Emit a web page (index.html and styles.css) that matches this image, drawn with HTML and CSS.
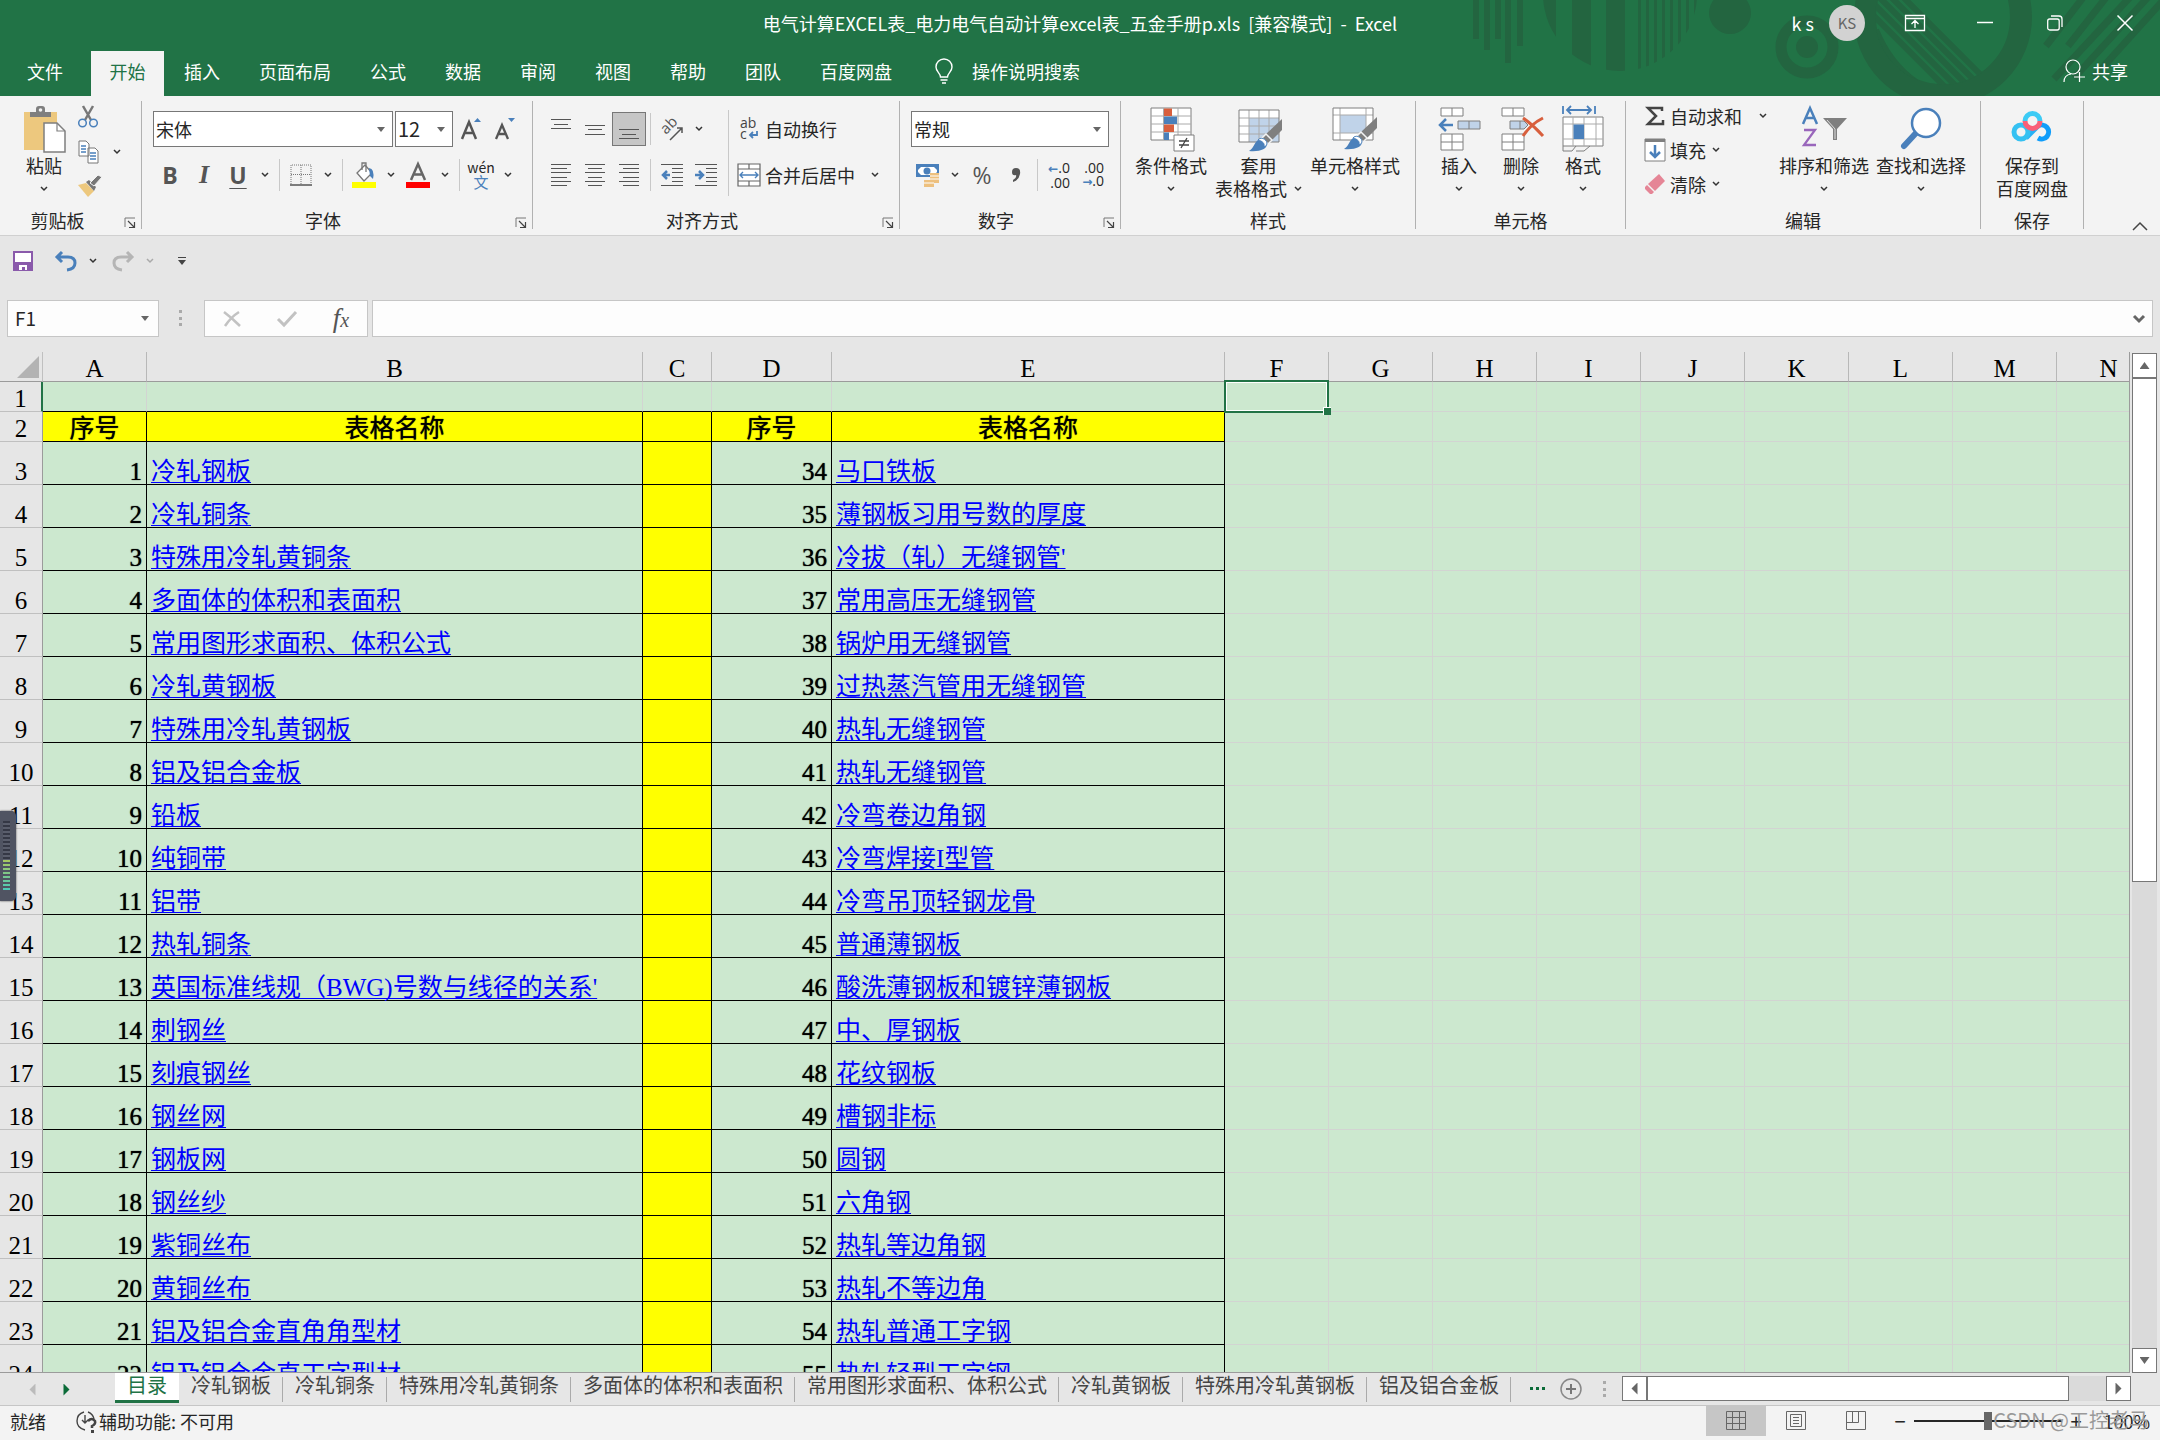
FILE: index.html
```html
<!doctype html>
<html lang="zh-CN">
    <head>
        <meta charset="utf-8" />
        <title>电气计算EXCEL表 - Excel</title>
        <link rel="stylesheet" href="styles.css">
    </head>
    <body>
        <svg class="sprite" aria-hidden="true">
            <symbol id="chev" viewBox="0 0 8 6"><path d="M1 1l3 3 3-3" fill="none" stroke="currentColor" stroke-width="1.5"/></symbol>
            <symbol id="launch" viewBox="0 0 12 12"><path d="M1 10V1h10" fill="none" stroke="#777"/><path d="M4 4l6 6M10.500 5v5.500H5" fill="none" stroke="#444" stroke-width="1.200"/></symbol>
            <symbol id="brush" viewBox="0 0 34 34"><path d="M34 1v11L24 22l-6-6z" fill="#7f7f7f"/><path d="M18 16l6 6-4 4-6-6z" fill="#7f7f7f" stroke="#f3f3f3" stroke-width="1.500"/><path d="M1 33c5-3 5-8 9-11 4-2 8 1 9 4 0 5-7 8-18 7z" fill="#4a80bb"/><path d="M10 22c2-3 8-2 9 3 0 2-1 3-3 4 1-4-2-6-6-7z" fill="#fff" stroke="#4a80bb"/></symbol>
        </svg>

        <header class="top">
            <svg class="deco" viewBox="0 0 760 96" width="760" height="96" aria-hidden="true">
                <defs>
                    <clipPath id="ball"><circle cx="220" cy="-6" r="77"/></clipPath>
                    <clipPath id="disc"><circle cx="543" cy="17" r="68"/></clipPath>
                </defs>
                <g fill="#236540">
                    <path d="M73 0h6v39h-6zM84 0h6v50h-6zM95 0h6v39h-6zM105 0h6v63h-6zM117 0h6v46h-6z"/>
                    <g clip-path="url(#ball)"><path d="M142 0h14v80h-14zM172 0h19v80h-19zM206 0h19v80h-19zM238 0h3v80h-3zM246 0h3v80h-3zM254 0h3v80h-3zM262 0h3v80h-3zM270 0h3v80h-3zM278 0h3v80h-3zM286 0h3v80h-3zM294 0h3v80h-3z"/></g>
                    <circle cx="330" cy="13" r="21"/>
                    <circle cx="407" cy="47" r="11"/>
                </g>
                <g fill="none" stroke="#236540">
                    <circle cx="407" cy="47" r="26" stroke-width="11"/>
                    <circle cx="543" cy="17" r="78" stroke-width="22"/>
                    <g clip-path="url(#disc)" stroke-width="6"><path d="M496-10l90 90M484-10l100 100M472-10l100 100M460-10l100 100M448-10l100 100" /><path d="M476 30q14 34 40 52l-34-18z" fill="#236540"/></g>
                    <path d="M685-5l-39 51M708-5l-40 51M732-5l-78 84M750-5l-76 83M768-5l-74 82" stroke-width="7"/>
                </g>
            </svg>
            <div class="titlebar">
                <div class="doc-title">电气计算EXCEL表_电力电气自动计算excel表_五金手册p.xls&nbsp; [兼容模式]&nbsp; -&nbsp; Excel</div>
                <div class="win">
                    <span class="user">k s</span>
                    <span class="avatar">KS</span>
                    <button class="win-btn" aria-label="功能区显示选项"><svg width="20" height="16" viewBox="0 0 20 16"><path d="M.5.5h19v15H.5zM.5 3.500h19M10 13V6M6.500 9L10 5.500 13.500 9" fill="none" stroke="#fff" stroke-width="1.300"/></svg></button>
                    <button class="win-btn" aria-label="最小化"><svg width="16" height="16"><path d="M0 7.500h16" stroke="#fff" stroke-width="1.500"/></svg></button>
                    <button class="win-btn" aria-label="还原"><svg width="16" height="16" viewBox="0 0 16 16"><rect x=".7" y="4" width="11.500" height="11" rx="2" fill="none" stroke="#fff" stroke-width="1.300"/><path d="M4 1h8q3 0 3 3v8" fill="none" stroke="#fff" stroke-width="1.300"/></svg></button>
                    <button class="win-btn" aria-label="关闭"><svg width="16" height="16"><path d="M.5.5l15 15M15.500.5l-15 15" stroke="#fff" stroke-width="1.500"/></svg></button>
                </div>
            </div>
            <nav class="tabs">
                <button class="tab file">文件</button>
                <button class="tab active">开始</button>
                <button class="tab">插入</button>
                <button class="tab">页面布局</button>
                <button class="tab">公式</button>
                <button class="tab">数据</button>
                <button class="tab">审阅</button>
                <button class="tab">视图</button>
                <button class="tab">帮助</button>
                <button class="tab">团队</button>
                <button class="tab">百度网盘</button>
                <button class="tab tell"><svg width="18" height="25" viewBox="0 0 18 25"><path d="M5.500 18c0-4-4.500-5-4.500-10a8 8 0 0 1 16 0c0 5-4.500 6-4.500 10zM5.500 21h7M7 24h4" fill="none" stroke="#fff" stroke-width="1.400"/></svg>操作说明搜索</button>
                <button class="tab share"><svg width="22" height="24" viewBox="0 0 22 24"><circle cx="10" cy="8" r="7" fill="none" stroke="#fff" stroke-width="1.200"/><path d="M1 23q0-7 7-8M11 18h11M16.500 13v10" fill="none" stroke="#fff" stroke-width="1.200"/></svg>共享</button>
            </nav>
        </header>

        <section class="ribbon">
            <div class="group clipboard">
                <div class="body">
                    <button class="big"><svg width="44" height="48" viewBox="0 0 44 48"><path d="M2 7h33v38H2z" fill="#edc87e"/><path d="M8 12V7h6V4q0-3 3-3h3q3 0 3 3v3h6v5z" fill="#7f7f7f"/><circle cx="18.500" cy="5" r="1.800" fill="#f3f3f3"/><path d="M22 18h13l8 8v21H22z" fill="#fff" stroke="#7f7f7f" stroke-width="1.500"/><path d="M35 18v8h8" fill="none" stroke="#7f7f7f" stroke-width="1.200"/></svg><span>粘贴</span><svg class="chev"><use href="#chev"/></svg></button>
                    <div class="stack">
                        <button aria-label="剪切"><svg width="20" height="24" viewBox="0 0 20 24"><path d="M5 1l8 14M15 1L7 15" stroke="#777" stroke-width="2.500"/><circle cx="4.500" cy="18" r="3.800" fill="none" stroke="#4a80bb" stroke-width="1.500"/><circle cx="15.500" cy="18" r="3.800" fill="none" stroke="#4a80bb" stroke-width="1.500"/></svg></button>
                        <div class="line"><button aria-label="复制"><svg width="21" height="24" viewBox="0 0 21 24"><path d="M1 1h7l3 3v12H1zM10 8h7l3 3v12H10z" fill="#fff" stroke="#777"/><path d="M3 6h5M3 9h5M3 12h5M12 13h6M12 16h6M12 19h6" stroke="#4a80bb" stroke-width="1.300"/></svg></button><svg class="chev"><use href="#chev"/></svg></div>
                        <button aria-label="格式刷"><svg width="24" height="22" viewBox="0 0 24 22"><path d="M0 10l8-2 8 8-6 6z" fill="#edc87e"/><path d="M8 7l3-2 7 7-2 4z" fill="#777"/><path d="M12 8l8-8 4 2-8 9z" fill="#777" stroke="#f3f3f3"/></svg></button>
                    </div>
                </div>
                <footer>剪贴板<button class="launch" aria-label="剪贴板选项"><svg width="12" height="12"><use href="#launch"/></svg></button></footer>
            </div>

            <div class="group font">
                <div class="rows">
                    <div class="line">
                        <span class="combo family"><select aria-label="字体"><option>宋体</option></select></span>
                        <span class="combo size"><select aria-label="字号"><option>12</option></select></span>
                        <button class="ico" aria-label="增大字号"><svg width="20" height="22" viewBox="0 0 20 22"><path d="M1 21L8 4l7 17M3.500 15h9" fill="none" stroke="#555" stroke-width="2.500"/><path d="M13 4l3.500-4L20 4z" fill="#4a80bb"/></svg></button>
                        <button class="ico" aria-label="减小字号"><svg width="20" height="22" viewBox="0 0 20 22"><path d="M1 21L7 7l6 14M3 16h8" fill="none" stroke="#555" stroke-width="2.300"/><path d="M13 0l3.500 4L20 0z" fill="#4a80bb"/></svg></button>
                    </div>
                    <div class="line">
                        <button class="ico glyph b">B</button>
                        <button class="ico glyph i">I</button>
                        <button class="ico glyph u">U</button>
                        <svg class="chev"><use href="#chev"/></svg>
                        <i class="sep"></i>
                        <button class="ico" aria-label="边框"><svg width="22" height="22" viewBox="0 0 22 22"><path d="M1 20V1h20v19M1 10.500h20M11 1v19" fill="none" stroke="#777" stroke-dasharray="1 1"/><path d="M0 21h22" stroke="#555" stroke-width="1.500"/></svg></button>
                        <svg class="chev"><use href="#chev"/></svg>
                        <i class="sep"></i>
                        <button class="ico" aria-label="填充颜色"><svg width="24" height="26" viewBox="0 0 24 26"><path d="M5 11l8-8 7 8-8 8z" fill="#fff" stroke="#777" stroke-width="1.300"/><path d="M10 8V1h4v9" fill="none" stroke="#777" stroke-width="1.300"/><path d="M17 6q6 1 4 11l-3-3z" fill="#4a80bb"/><path d="M0 20h24v6H0z" fill="#ff0"/></svg></button>
                        <svg class="chev"><use href="#chev"/></svg>
                        <button class="ico" aria-label="字体颜色"><svg width="24" height="26" viewBox="0 0 24 26"><path d="M5 18l7-16 7 16M7.500 12.500h9" fill="none" stroke="#666" stroke-width="2.500"/><path d="M0 20h24v6H0z" fill="red"/></svg></button>
                        <svg class="chev"><use href="#chev"/></svg>
                        <i class="sep"></i>
                        <button class="ico pinyin"><span>wén</span><b>文</b></button>
                        <svg class="chev"><use href="#chev"/></svg>
                    </div>
                </div>
                <footer>字体<button class="launch" aria-label="字体选项"><svg width="12" height="12"><use href="#launch"/></svg></button></footer>
            </div>

            <div class="group align">
                <div class="body">
                    <div class="rows">
                        <div class="line">
                            <button class="ico" aria-label="顶端对齐"><svg width="20" height="26"><path d="M0 3.500h20M3 8.500h14M0 12.500h20" stroke="#555"/></svg></button>
                            <button class="ico" aria-label="垂直居中"><svg width="20" height="26"><path d="M0 9.500h20M3 13.500h14M0 18.500h20" stroke="#555"/></svg></button>
                            <button class="ico on" aria-label="底端对齐"><svg width="20" height="26"><path d="M0 13.500h20M3 18.500h14M0 22.500h20" stroke="#555"/></svg></button>
                            <i class="sep"></i>
                            <button class="ico" aria-label="方向"><svg width="22" height="22" viewBox="0 0 22 22"><text font-size="15" fill="#555" transform="translate(5 17) rotate(-45)" font-family="Open Sans">ab</text><path d="M9 22L21 10M16 10h5v5" fill="none" stroke="#555" stroke-width="1.500"/></svg></button>
                            <svg class="chev"><use href="#chev"/></svg>
                        </div>
                        <div class="line">
                            <button class="ico" aria-label="左对齐"><svg width="20" height="22"><path d="M0 .5h20M0 4.500h16M0 8.500h20M0 13.500h16M0 17.500h20M0 21.500h16" stroke="#555"/></svg></button>
                            <button class="ico" aria-label="居中"><svg width="20" height="22"><path d="M0 .5h20M3 4.500h14M0 8.500h20M3 13.500h14M0 17.500h20M3 21.500h14" stroke="#555"/></svg></button>
                            <button class="ico" aria-label="右对齐"><svg width="20" height="22"><path d="M0 .5h20M4 4.500h16M0 8.500h20M4 13.500h16M0 17.500h20M4 21.500h16" stroke="#555"/></svg></button>
                            <i class="sep"></i>
                            <button class="ico" aria-label="减少缩进"><svg width="22" height="22"><path d="M0 .5h22M11 4.500h11M11 8.500h11M11 13.500h11M11 17.500h11M0 21.500h22" stroke="#555"/><path d="M9 11H2M6 7l-4 4 4 4" fill="none" stroke="#4a80bb" stroke-width="2.500"/></svg></button>
                            <button class="ico" aria-label="增加缩进"><svg width="22" height="22"><path d="M0 .5h22M11 4.500h11M11 8.500h11M11 13.500h11M11 17.500h11M0 21.500h22" stroke="#555"/><path d="M0 11h8M4 7l4 4-4 4" fill="none" stroke="#4a80bb" stroke-width="2.500"/></svg></button>
                        </div>
                    </div>
                    <i class="sep tall"></i>
                    <div class="rows wrap">
                        <div class="line"><button class="text"><svg width="24" height="24" viewBox="0 0 24 24"><text x="3" y="11" font-size="14" fill="#444" font-family="Open Sans">ab</text><text x="3" y="22" font-size="14" fill="#444" font-family="Open Sans">c</text><path d="M20 14v4h-7M16 15l-3 3 3 3" fill="none" stroke="#4a80bb" stroke-width="1.800"/></svg>自动换行</button></div>
                        <div class="line"><button class="text"><svg width="24" height="24" viewBox="0 0 24 24"><path d="M1 1h22v22H1zM1 6h22M1 18h22M12 1v5M12 18v5" fill="#fff" stroke="#666" stroke-width="1.200"/><path d="M3 12h18M6 9l-3 3 3 3M18 9l3 3-3 3" fill="none" stroke="#4a80bb" stroke-width="1.400"/></svg>合并后居中</button><svg class="chev"><use href="#chev"/></svg></div>
                    </div>
                </div>
                <footer>对齐方式<button class="launch" aria-label="对齐选项"><svg width="12" height="12"><use href="#launch"/></svg></button></footer>
            </div>

            <div class="group number">
                <div class="rows">
                    <div class="line"><span class="combo format"><select aria-label="数字格式"><option>常规</option></select></span></div>
                    <div class="line">
                        <button class="ico" aria-label="会计格式"><svg width="24" height="24" viewBox="0 0 24 24"><path d="M0 1h23v13H0z" fill="#4a80bb"/><path d="M5 4h13l3 3v2l-3 3H5L2 9V7z" fill="#fff"/><circle cx="11" cy="8" r="3.500" fill="#4a80bb"/><path d="M14 10h9v10h-5v4H8v-7h6z" fill="#edc07e"/><path d="M14 13h9M14 16h9M8 20h10" stroke="#fff"/></svg></button>
                        <svg class="chev"><use href="#chev"/></svg>
                        <button class="ico glyph pct">%</button>
                        <button class="ico" aria-label="千位分隔"><svg width="10" height="16" viewBox="0 0 10 16"><path d="M5 1q5 0 4 6-1 6-7 8v-2q4-2 3-5-4 1-4-3 0-4 4-4z" fill="#555"/></svg></button>
                        <i class="sep"></i>
                        <button class="ico dec"><span><em>←</em>.0</span><span>.00</span></button>
                        <button class="ico dec"><span>.00</span><span><em>→</em>.0</span></button>
                    </div>
                </div>
                <footer>数字<button class="launch" aria-label="数字选项"><svg width="12" height="12"><use href="#launch"/></svg></button></footer>
            </div>

            <div class="group styles">
                <div class="body">
                    <button class="big"><svg width="46" height="48" viewBox="0 0 46 48"><path d="M3 3h40v32H3z" fill="#fff" stroke="#7f7f7f"/><path d="M3 11h40M3 19h40M3 27h40M15.500 3v32M30 3v32" stroke="#aaa"/><path d="M16 3.500h8V11h-8zM16 19.500h10V27H16z" fill="#d85f3d"/><path d="M16 11.500h13V19H16zM16 27.500h5V35h-5z" fill="#4a80bb"/><path d="M26 30h20v16H26z" fill="#fff" stroke="#7f7f7f"/><path d="M31 36h10M31 40h10M39 33l-6 10" stroke="#444" stroke-width="1.300"/></svg><span>条件格式</span><svg class="chev"><use href="#chev"/></svg></button>
                    <button class="big"><svg width="46" height="48" viewBox="0 0 46 48"><path d="M3 5h40v32H3z" fill="#fff"/><path d="M13 13h30v24H13z" fill="#c0d3e9"/><path d="M3 13h40M3 21h40M3 29h40M13 5v32M23 5v32M33 5v32" stroke="#aaa"/><path d="M3 5h40v32H3z" fill="none" stroke="#7f7f7f"/><use href="#brush" x="12" y="13" width="34" height="34"/></svg><span>套用</span><span class="line">表格格式<svg class="chev"><use href="#chev"/></svg></span></button>
                    <button class="big"><svg width="46" height="48" viewBox="0 0 46 48"><path d="M1 3h40v32H1z" fill="#fff"/><path d="M8 10h26v18H8z" fill="#c0d3e9"/><path d="M1 10h40M1 28h40M8 3v32M34 3v32" stroke="#aaa"/><path d="M1 3h40v32H1z" fill="none" stroke="#7f7f7f"/><use href="#brush" x="11" y="11" width="34" height="34"/></svg><span>单元格样式</span><svg class="chev"><use href="#chev"/></svg></button>
                </div>
                <footer>样式</footer>
            </div>

            <div class="group cells">
                <div class="body">
                    <button class="big"><svg width="44" height="48" viewBox="0 0 44 48"><path d="M4 3h22v8H4zM15 3v8M4 29h22v16H4zM4 37h22M15 29v16" fill="#fff" stroke="#7f7f7f"/><path d="M21 16h22v8H21zM32 16v8" fill="#c0d3e9" stroke="#7f7f7f"/><path d="M16 20H3M9 14l-6 6 6 6" fill="none" stroke="#4a80bb" stroke-width="2.500"/></svg><span>插入</span><svg class="chev"><use href="#chev"/></svg></button>
                    <button class="big"><svg width="44" height="48" viewBox="0 0 44 48"><path d="M3 3h22v8H3zM14 3v8M3 29h22v16H3zM3 37h22M14 29v16" fill="#fff" stroke="#7f7f7f"/><path d="M11 16h14l4 4-4 4H11zM21 16v8" fill="#c0d3e9" stroke="#7f7f7f"/><path d="M24 13q10 7 20 18M44 13q-12 6-20 18" fill="none" stroke="#d85f3d" stroke-width="3"/></svg><span>删除</span><svg class="chev"><use href="#chev"/></svg></button>
                    <button class="big"><svg width="44" height="48" viewBox="0 0 44 48"><path d="M2 12h40v29H2z" fill="#fff" stroke="#7f7f7f"/><path d="M2 19h40M2 34h40M12 12v29M23 12v29M35 12v29" stroke="#aaa"/><path d="M12.500 19.500H23V34H12.500z" fill="#4a80bb"/><path d="M2 1v8M34 1v8M6 5h24M10 1L6 5l4 4M26 1l4 4-4 4" fill="none" stroke="#4a80bb" stroke-width="1.800"/><path d="M2 41v5h9l4-5M15 46h8l6-5" fill="none" stroke="#7f7f7f"/></svg><span>格式</span><svg class="chev"><use href="#chev"/></svg></button>
                </div>
                <footer>单元格</footer>
            </div>

            <div class="group edit">
                <div class="body">
                    <div class="stack">
                        <div class="line"><button class="text"><svg width="22" height="24" viewBox="0 0 22 24"><path d="M18 7V4H4l8 8-8 8h15v-4" fill="none" stroke="#444" stroke-width="2.500"/></svg>自动求和</button><svg class="chev far"><use href="#chev"/></svg></div>
                        <div class="line"><button class="text"><svg width="22" height="24" viewBox="0 0 22 24"><path d="M1 1h20v22H1z" fill="#fff" stroke="#7f7f7f"/><path d="M1 1h20v3H1z" fill="#7f7f7f"/><path d="M11 7v12M6 14l5 5 5-5" fill="none" stroke="#4a80bb" stroke-width="2.500"/></svg>填充</button><svg class="chev"><use href="#chev"/></svg></div>
                        <div class="line"><button class="text"><svg width="22" height="24" viewBox="0 0 22 24"><path d="M15 2l6 7L11 19l-7-7z" fill="#e58596"/><path d="M3 13l7 7-2 2H6l-5-5v-2z" fill="#e58596"/></svg>清除</button><svg class="chev"><use href="#chev"/></svg></div>
                    </div>
                    <button class="big"><svg width="46" height="48" viewBox="0 0 46 48"><path d="M2 19L9 3l7 16M5 13h8" fill="none" stroke="#4a80bb" stroke-width="2.500"/><path d="M3 25h11L3 40h12" fill="none" stroke="#9966bb" stroke-width="2.300"/><path d="M22 13h24L36 24v11h-4V24z" fill="#7f7f7f"/><path d="M26 15l8 9v10" fill="none" stroke="#ddd"/></svg><span>排序和筛选</span><svg class="chev"><use href="#chev"/></svg></button>
                    <button class="big"><svg width="46" height="48" viewBox="0 0 46 48"><path d="M18 28L6 41" stroke="#4a80bb" stroke-width="6" stroke-linecap="round"/><circle cx="28" cy="18" r="14" fill="#fff" stroke="#4a80bb" stroke-width="2.500"/></svg><span>查找和选择</span><svg class="chev"><use href="#chev"/></svg></button>
                </div>
                <footer>编辑</footer>
            </div>

            <div class="group save">
                <div class="body">
                    <button class="big"><svg width="44" height="48" viewBox="0 0 44 48" fill="none" stroke-width="5"><path d="M28 21a7 7 0 1 1 0 12" stroke="#109dfa"/><path d="M16 33l12-12" stroke="#28b0f5"/><circle cx="11" cy="27" r="7" stroke="#35c1f2"/><path d="M15 16a7.500 7.500 0 0 1 15 0" stroke="#3ccbf5"/><path d="M15 16a7.500 7.500 0 0 0 15 0" stroke="#fa5f78"/></svg><span>保存到</span><span>百度网盘</span></button>
                </div>
                <footer>保存</footer>
            </div>
            <button class="collapse" aria-label="折叠功能区"><svg width="16" height="10"><path d="M1 9l7-7 7 7" fill="none" stroke="#444" stroke-width="1.500"/></svg></button>
        </section>

        <div class="quick">
            <button class="ico" aria-label="保存"><svg width="20" height="20"><path d="M0 0h20v20H0z" fill="#8a5aab"/><path d="M2 2h16v9H2zM6 14h8v5h-2v-3H9v3H6z" fill="#fff"/></svg></button>
            <button class="ico undo" aria-label="撤消"><svg width="22" height="20"><path d="M7 1L2 6l5 5M2 6h11q7 0 7 6t-8 7" fill="none" stroke="#4a80bb" stroke-width="3"/></svg></button>
            <svg class="chev"><use href="#chev"/></svg>
            <button class="ico redo" aria-label="恢复"><svg width="22" height="20"><path d="M15 1l5 5-5 5M20 6H9q-7 0-7 6t8 7" fill="none" stroke="#b5b5b5" stroke-width="3"/></svg></button>
            <svg class="chev dim"><use href="#chev"/></svg>
            <button class="ico more" aria-label="自定义快速访问工具栏"><svg width="8" height="8"><path d="M0 .5h8" stroke="#444"/><path d="M0 3h8L4 8z" fill="#444"/></svg></button>
        </div>

        <div class="formula">
            <span class="combo name"><input type="text" aria-label="名称框" value="F1" /></span>
            <svg class="dots" width="4" height="18"><path d="M0 1.500h3M0 8.500h3M0 14.500h3" stroke="#aaa" stroke-width="3"/></svg>
            <div class="fx">
                <button aria-label="取消"><svg width="18" height="18"><path d="M1 2q8 6 16 14M16 2Q8 7 2 16" fill="none" stroke="#c2c2c2" stroke-width="2.500"/></svg></button>
                <button aria-label="输入"><svg width="20" height="18"><path d="M1 9l6 6L19 2" fill="none" stroke="#c2c2c2" stroke-width="3"/></svg></button>
                <button class="fx-label">f<small>x</small></button>
            </div>
            <div class="entry"><input type="text" aria-label="编辑栏" /><svg width="12" height="10"><path d="M1 2l5 5 5-5" fill="none" stroke="#666" stroke-width="3"/></svg></div>
        </div>

        <main class="sheet">
            <div class="grid">
                <table>
                    <colgroup>
                        <col class="c-head"><col class="c-std"><col class="c-b"><col class="c-c"><col class="c-d"><col class="c-e">
                        <col class="c-std" span="9">
                    </colgroup>
                    <thead>
                        <tr><th class="corner"></th><th>A</th><th>B</th><th>C</th><th>D</th><th>E</th><th>F</th><th>G</th><th>H</th><th>I</th><th>J</th><th>K</th><th>L</th><th>M</th><th>N</th></tr>
                    </thead>
                    <tbody id="rows"></tbody>
                </table>
            </div>
            <div class="vbar">
                <button class="arrow up" aria-label="向上滚动"></button>
                <div class="track"><div class="thumb"></div></div>
                <button class="arrow down" aria-label="向下滚动"></button>
            </div>
            <div class="meter"><i></i><b></b></div>
        </main>

        <div class="sheets">
            <div class="nav"><button class="arrow left dim" aria-label="上一张"></button><button class="arrow right go" aria-label="下一张"></button></div>
            <button class="sheet-tab current">目录</button>
            <button class="sheet-tab">冷轧钢板</button>
            <button class="sheet-tab">冷轧铜条</button>
            <button class="sheet-tab">特殊用冷轧黄铜条</button>
            <button class="sheet-tab">多面体的体积和表面积</button>
            <button class="sheet-tab">常用图形求面积、体积公式</button>
            <button class="sheet-tab">冷轧黄钢板</button>
            <button class="sheet-tab">特殊用冷轧黄钢板</button>
            <button class="sheet-tab">铝及铝合金板</button>
            <button class="ellipsis" aria-label="更多工作表"><svg width="16" height="4"><path d="M0 0h3v3H0zM6 0h3v3H6zM12 0h3v3h-3z" fill="#0b6b38"/></svg></button>
            <button class="add" aria-label="新工作表"><svg width="22" height="22"><circle cx="11" cy="11" r="10" fill="none" stroke="#888" stroke-width="1.500"/><path d="M11 6v10M6 11h10" stroke="#777" stroke-width="2"/></svg></button>
            <svg class="dots" width="4" height="18"><path d="M0 1.500h3M0 8.500h3M0 14.500h3" stroke="#aaa" stroke-width="3"/></svg>
            <div class="hbar">
                <button class="arrow left" aria-label="向左滚动"></button>
                <div class="track"><div class="thumb"></div></div>
                <button class="arrow right" aria-label="向右滚动"></button>
            </div>
        </div>

        <footer class="status">
            <span>就绪</span>
            <span class="access"><svg width="22" height="24" viewBox="0 0 22 24"><path d="M8 3Q1 5 1 12t8 9M12 3q5 2 6 7M9 6v8M6 11l3 3 3-3" fill="none" stroke="#444" stroke-width="1.400"/><path d="M12 12q4-4 7 0 1 3-3 5v2" fill="none" stroke="#444" stroke-width="2.500"/><path d="M15 21h3v3h-3z" fill="#444"/></svg>辅助功能: 不可用</span>
            <div class="views">
                <button class="on" aria-label="普通"><svg width="20" height="20"><path d="M.5.500h19v18H.5zM.5 6.500h19M.5 12.500h19M6.500.5v18M13.500.5v18" fill="none" stroke="#666"/></svg></button>
                <button aria-label="页面布局"><svg width="20" height="20"><path d="M.5.500h19v18H.5zM4.500 3.500h11v12h-11zM7 6.500h6M7 9.500h6M7 12.500h6" fill="none" stroke="#666"/></svg></button>
                <button aria-label="分页预览"><svg width="20" height="20"><path d="M.5.500h19v18H.5zM.5 11.500h12V.5M6.500.5v11" fill="none" stroke="#666"/></svg></button>
            </div>
            <div class="zoom">
                <button aria-label="缩小">−</button>
                <input type="range" min="0" max="100" value="50" aria-label="缩放" />
                <button aria-label="放大">+</button>
                <span class="percent">100%</span>
                <span class="mark">CSDN @工控老马</span>
            </div>
        </footer>
        <script src="sheet.js"></script>
    </body>
</html>
```
FILE: styles.css
```css
* {
    box-sizing: border-box;
}

body {
    margin: 0;
    height: 100vh;
    display: flex;
    flex-direction: column;
    overflow: hidden;
    background: #e6e6e6;
    color: #262626;
    font: 18px/24px "Noto Sans CJK SC", sans-serif;
}

button,
input,
select {
    font: inherit;
    color: inherit;
    margin: 0;
    padding: 0;
    border: 0;
    background: none;
}

svg {
    display: block;
    flex: none;
    overflow: visible;
}

.sprite {
    position: absolute;
    width: 0;
    height: 0;
}

.line {
    display: flex;
    align-items: center;
}

.chev {
    width: 8px;
    height: 6px;
    margin: 0 6px;
    color: #333;
}

.chev.dim {
    color: #aaa;
}

/* Title bar and ribbon tabs */
.top {
    position: relative;
    flex: none;
    height: 96px;
    background: #217346;
    color: #fff;
}

.deco {
    position: absolute;
    top: 0;
    right: 0;
    overflow: hidden;
}

.titlebar {
    position: relative;
    height: 46px;
    display: grid;
    grid-template-columns: 1fr auto 1fr;
    align-items: center;
}

.doc-title {
    grid-column: 2;
    white-space: nowrap;
}

.win {
    display: flex;
    align-items: center;
    justify-content: flex-end;
}

.avatar {
    width: 36px;
    height: 36px;
    margin: 0 15px 0 15px;
    border-radius: 50%;
    background: #d2d2d2;
    color: #666;
    font-size: 15px;
    line-height: 36px;
    text-align: center;
}

.win-btn {
    width: 70px;
    height: 46px;
    display: flex;
    align-items: center;
    justify-content: center;
}

.tabs {
    position: relative;
    display: flex;
    gap: 1px;
    padding: 5px 32px 0 0;
}

.tab {
    height: 45px;
    padding: 0 19px 5px;
}

.tab.file {
    padding: 0 27px 5px;
}

.tab.active {
    width: 73px;
    padding: 0 0 5px;
    background: #f3f3f3;
    color: #217346;
}

.tell,
.share {
    display: flex;
    align-items: center;
    gap: 19px;
    padding: 0 23px 5px;
}

.share {
    gap: 7px;
    padding: 0 0 5px;
    margin-left: auto;
}

/* Ribbon */
.ribbon {
    flex: none;
    display: flex;
    height: 140px;
    padding-top: 5px;
    background: #f3f3f3;
    border-bottom: 1px solid #d0d0d0;
}

.group {
    height: 128px;
    display: flex;
    flex-direction: column;
    justify-content: space-between;
    border-right: 1px solid #b1b1b1;
}

.group footer {
    position: relative;
    height: 24px;
    margin-bottom: -3px;
    text-align: center;
    line-height: 24px;
}

.launch {
    position: absolute;
    right: 5px;
    top: 9px;
}

.clipboard { width: 142px; }
.font { width: 391px; }
.align { width: 367px; }
.number { width: 221px; }
.styles { width: 295px; }
.cells { width: 210px; }
.edit { width: 355px; }
.save { width: 103px; }

.clipboard footer {
    padding-right: 26px;
}

.font footer,
.align footer,
.number footer {
    padding-right: 28px;
}

.body {
    display: flex;
}

.big {
    display: flex;
    flex-direction: column;
    align-items: center;
    padding-top: 4px;
    line-height: 23px;
    white-space: nowrap;
}

.big > span:first-of-type {
    margin-top: 1px;
}

.big > .chev {
    margin-top: 9px;
}

.clipboard .big {
    margin-left: 19px;
    width: 50px;
}

.clipboard .big .chev {
    margin-left: 0;
    margin-right: 0;
}

.stack {
    display: flex;
    flex-direction: column;
    align-items: flex-start;
}

.clipboard .stack {
    gap: 11px;
    padding: 4px 0 0 9px;
}

.clipboard .stack .chev {
    margin-left: 14px;
}

.rows {
    display: flex;
    flex-direction: column;
    gap: 10px;
    padding: 10px 0 0 11px;
}

.rows > .line {
    height: 36px;
}

.ico {
    width: 34px;
    height: 34px;
    display: flex;
    align-items: center;
    justify-content: center;
}

.ico.on {
    background: #c6c6c6;
    border: 1px solid #777;
}

.sep {
    width: 1px;
    height: 32px;
    margin: 0 4px;
    background: #c8c8c8;
}

.sep.tall {
    height: 86px;
    margin: 9px 0 0 5px;
}

.combo {
    position: relative;
    display: block;
    height: 36px;
    background: #fff;
    border: 1px solid #777;
}

.combo::after {
    content: "";
    position: absolute;
    right: 7px;
    top: 15px;
    border: 4px solid transparent;
    border-top: 5px solid #666;
    border-bottom: 0;
    pointer-events: none;
}

.combo select,
.combo input {
    width: 100%;
    height: 100%;
    padding: 0 2px;
    appearance: none;
    outline: 0;
}

.combo.family { width: 240px; }
.combo.size { width: 58px; margin: 0 1px 0 2px; font-size: 20px; }
.combo.format { width: 198px; }

.glyph {
    font: bold 23px "Open Sans", sans-serif;
    color: #555;
}

.glyph.i {
    font-family: "Liberation Serif", serif;
    font-style: italic;
    font-size: 26px;
}

.glyph.u {
    text-decoration: underline;
    text-decoration-thickness: 1px;
    text-underline-offset: 4px;
}

.glyph.pct {
    font-weight: normal;
}

.pinyin {
    flex-direction: column;
    font-size: 14px;
    line-height: 14px;
}

.pinyin b {
    font-weight: normal;
    font-size: 15px;
    line-height: 16px;
    color: #4a80bb;
}

.dec {
    flex-direction: column;
    align-items: flex-end;
    padding-right: 6px;
    font: 14px/13px "Open Sans", sans-serif;
}

.dec em {
    font-family: "DejaVu Sans", sans-serif;
    font-style: normal;
    font-weight: bold;
    font-size: 12px;
    color: #4a80bb;
}

.rows.wrap {
    padding-left: 8px;
}

.text {
    display: flex;
    align-items: center;
    gap: 4px;
    white-space: nowrap;
}

.wrap .chev {
    margin-left: 16px;
}

.styles .body {
    padding-left: 14px;
    gap: 8px;
}

.styles .big .line .chev {
    margin-right: 0;
    margin-left: 7px;
}

.cells .body {
    padding-left: 21px;
    gap: 18px;
}

.edit .stack {
    gap: 10px;
    width: 153px;
    padding: 3px 0 0 18px;
}

.edit .chev.far {
    margin-left: 17px;
}

.edit .big {
    margin-right: 7px;
}

.save .big {
    width: 102px;
}

.collapse {
    margin: 0 0 4px auto;
    padding-right: 12px;
    align-self: flex-end;
}

/* Quick access bar */
.quick {
    flex: none;
    display: flex;
    align-items: center;
    height: 50px;
    padding-left: 6px;
}

.quick .undo {
    margin-left: 9px;
}

.quick .redo {
    margin-left: 3px;
}

.quick .more {
    margin-left: 5px;
}

/* Formula bar */
.formula {
    flex: none;
    display: flex;
    height: 66px;
    padding: 14px 7px 14px;
}

.formula .combo,
.fx,
.entry {
    height: 37px;
    background: #fdfdfd;
    border: 1px solid #c6c6c6;
}

.combo.name {
    width: 152px;
}

.combo.name::after {
    right: 9px;
}

.combo.name input {
    padding: 0 7px 2px;
    font-size: 19px;
}

.formula .dots {
    margin: 10px 21px 0 20px;
}

.fx {
    display: flex;
    justify-content: space-around;
    align-items: center;
    width: 164px;
    margin-right: 4px;
}

.fx-label {
    font: italic 27px "Liberation Serif", serif;
    color: #555;
}

.fx-label small {
    font-size: 20px;
}

.entry {
    flex: 1;
    display: flex;
    align-items: center;
    padding-right: 7px;
}

.entry input {
    flex: 1;
    outline: 0;
}

/* Worksheet */
.sheet {
    position: relative;
    flex: 1;
    min-height: 0;
    display: flex;
}

.grid {
    flex: 1;
    min-width: 0;
    overflow: hidden;
    border-right: 1px solid #9b9b9b;
    border-bottom: 1px solid #9b9b9b;
}

table {
    width: 2161px;
    table-layout: fixed;
    border-collapse: separate;
    border-spacing: 0;
    font: 25px/24px "Liberation Serif", "Noto Sans CJK SC", serif;
    color: #000;
}

.c-head { width: 43px; }
.c-std { width: 104px; }
.c-b { width: 496px; }
.c-c { width: 69px; }
.c-d { width: 120px; }
.c-e { width: 393px; }

th {
    padding: 0;
    height: 30px;
    font-weight: normal;
    vertical-align: bottom;
    background: #e6e6e6;
    border-bottom: 1px solid #9b9b9b;
    border-right: 1px solid #b8b8b8;
}

tbody th {
    border-bottom-color: #c0c0c0;
    border-right-color: #9b9b9b;
}

.corner {
    border-right-color: #c0c0c0;
}

.corner::after {
    content: "";
    display: block;
    margin: 0 3px 3px auto;
    width: 22px;
    height: 22px;
    background: #b3b3b3;
    clip-path: polygon(100% 0, 100% 100%, 0 100%);
}

td {
    position: relative;
    height: 43px;
    padding: 0 4px;
    vertical-align: bottom;
    white-space: nowrap;
    background: #cce8cf;
    border-right: 1px solid #d2d4d2;
    border-bottom: 1px solid #d2d4d2;
}

.short td {
    height: 30px;
}

.boxed {
    border-color: #000;
}

.under {
    border-bottom-color: #000;
}

.yellow {
    background: #ff0;
}

.title {
    text-align: center;
    text-shadow: 0 0 1px #000;
}

.num {
    text-align: right;
    text-shadow: 0 0 1px #000;
}

td a {
    color: #00f;
    text-decoration: underline;
    text-decoration-thickness: 1px;
    text-underline-offset: 2px;
    text-decoration-skip-ink: none;
}

.first th {
    border-right: 2px solid #217346;
}

.first td:nth-child(6) {
    border-right-color: #217346;
}

.active-cell::before {
    content: "";
    position: absolute;
    inset: -2px -1px -2px -1px;
    border: 2px solid #217346;
    box-shadow: inset 0 0 0 1px #fff;
    z-index: 1;
}

.active-cell::after {
    content: "";
    position: absolute;
    right: -3px;
    bottom: -4px;
    width: 7px;
    height: 7px;
    background: #217346;
    border: solid #fff;
    border-width: 1px 0 0 1px;
    z-index: 2;
}

/* Scroll bars */
.arrow {
    flex: none;
    width: 25px;
    height: 25px;
    display: flex;
    align-items: center;
    justify-content: center;
    background: #fff;
    border: 1px solid #777;
}

.arrow::after {
    content: "";
    width: 10px;
    height: 12px;
    background: #666;
}

.up::after { clip-path: polygon(50% 20%, 100% 80%, 0 80%); }
.down::after { clip-path: polygon(0 20%, 100% 20%, 50% 80%); }
.left::after { clip-path: polygon(80% 0, 80% 100%, 20% 50%); }
.right::after { clip-path: polygon(20% 0, 80% 50%, 20% 100%); }

.track {
    flex: 1;
    background: #dadada;
}

.thumb {
    background: #fff;
    border: 1px solid #777;
}

.vbar {
    width: 25px;
    margin: 1px 3px 0 2px;
    display: flex;
    flex-direction: column;
}

.vbar .thumb {
    height: 52%;
}

.meter {
    position: absolute;
    left: 0;
    top: 459px;
    width: 16px;
    height: 90px;
    padding: 10px 6px 10px 3px;
    border-radius: 0 5px 5px 0;
    background: #505462;
    box-shadow: 0 0 2px #333;
}

.meter i,
.meter b {
    display: block;
    height: 39px;
    background: repeating-linear-gradient(#353845 0 2px, #5a5e6c 2px 4px);
}

.meter b {
    height: 30px;
    background: repeating-linear-gradient(transparent 0 2px, #505462 2px 4px), linear-gradient(#a8c860, #4cc8b8);
}

/* Sheet tabs */
.sheets {
    flex: none;
    display: flex;
    height: 33px;
    border-bottom: 1px solid #c6c6c6;
    color: #444;
}

.nav {
    display: flex;
    width: 115px;
    padding: 4px 0 0 20px;
    gap: 9px;
}

.nav .arrow {
    background: none;
    border: 0;
}

.nav .dim::after { background: #bbb; }
.nav .go::after { background: #0b6b38; }

.sheet-tab {
    position: relative;
    height: 30px;
    padding: 0 12px 6px;
    font-size: 20px;
    line-height: 24px;
    white-space: nowrap;
}

.sheet-tab::after {
    content: "";
    position: absolute;
    right: 0;
    top: 4px;
    bottom: 1px;
    width: 1px;
    background: #aaa;
}

.sheet-tab.current {
    background: #fff;
    color: #217346;
    padding-bottom: 3px;
    border-bottom: 3px solid #217346;
}

.sheet-tab.current::after {
    content: none;
}

.ellipsis {
    margin-left: 19px;
}

.add {
    margin: 0 21px 0 14px;
}

.sheets .dots {
    margin: 8px 15px 0 0;
}

.hbar {
    flex: 1;
    display: flex;
    height: 25px;
    margin: 3px 29px 0 0;
}

.hbar .thumb {
    width: 92%;
    height: 25px;
}

/* Status bar */
.status {
    flex: none;
    display: flex;
    align-items: center;
    height: 34px;
    padding: 0 10px 4px;
    background: #f3f3f3;
}

.access {
    display: flex;
    align-items: center;
    margin-left: 30px;
    gap: 1px;
}

.views {
    display: flex;
    margin-left: auto;
}

.views button {
    width: 60px;
    height: 30px;
    display: flex;
    align-items: center;
    justify-content: center;
}

.views .on {
    background: #c6c6c6;
}

.zoom {
    position: relative;
    display: flex;
    align-items: center;
    width: 264px;
}

.zoom button {
    width: 12px;
    margin-left: 8px;
    font-size: 20px;
}

.zoom input {
    width: 148px;
    height: 18px;
    margin-left: 8px;
    appearance: none;
    background: linear-gradient(#262626, #262626) center / 100% 2px no-repeat;
}

.zoom input::-webkit-slider-thumb {
    appearance: none;
    width: 8px;
    height: 18px;
    background: #666;
}

.percent {
    margin-left: auto;
}

.mark {
    position: absolute;
    right: 1px;
    top: -1px;
    font-size: 20px;
    color: #999;
    white-space: nowrap;
}
```
FILE: sheet.js
```js
const left = [
    "冷轧钢板", "冷轧铜条", "特殊用冷轧黄铜条", "多面体的体积和表面积",
    "常用图形求面积、体积公式", "冷轧黄钢板", "特殊用冷轧黄钢板",
    "铝及铝合金板", "铅板", "纯铜带", "铝带", "热轧铜条",
    "英国标准线规（BWG)号数与线径的关系'", "刺钢丝", "刻痕钢丝", "钢丝网",
    "钢板网", "钢丝纱", "紫铜丝布", "黄铜丝布", "铝及铝合金直角角型材",
    "铝及铝合金直工字型材",
];
const right = [
    "马口铁板", "薄钢板习用号数的厚度", "冷拔（轧）无缝钢管'",
    "常用高压无缝钢管", "锅炉用无缝钢管", "过热蒸汽管用无缝钢管",
    "热轧无缝钢管", "热轧无缝钢管", "冷弯卷边角钢", "冷弯焊接I型管",
    "冷弯吊顶轻钢龙骨", "普通薄钢板", "酸洗薄钢板和镀锌薄钢板",
    "中、厚钢板", "花纹钢板", "槽钢非标", "圆钢", "六角钢",
    "热轧等边角钢", "热轧不等边角", "热轧普通工字钢", "热轧轻型工字钢",
];

const blank = "<td></td>";
const under = '<td class="under"></td>';
const title = (text) => `<td class="boxed yellow title">${text}</td>`;
const num = (n) => `<td class="boxed num">${n}</td>`;
const link = (text) => `<td class="boxed"><a href="#">${text}</a></td>`;

let html = `<tr class="short first"><th>1</th>${under.repeat(5)}<td class="active-cell"></td>${blank.repeat(8)}</tr>`;
html += `<tr class="short"><th>2</th>${title("序号")}${title("表格名称")}${title("")}${title("序号")}${title("表格名称")}${blank.repeat(9)}</tr>`;

left.forEach((name, i) => {
    html += `<tr><th>${i + 3}</th>${num(i + 1)}${link(name)}<td class="boxed yellow"></td>${num(i + 34)}${link(right[i])}${blank.repeat(9)}</tr>`;
});

document.getElementById("rows").innerHTML = html;
```
